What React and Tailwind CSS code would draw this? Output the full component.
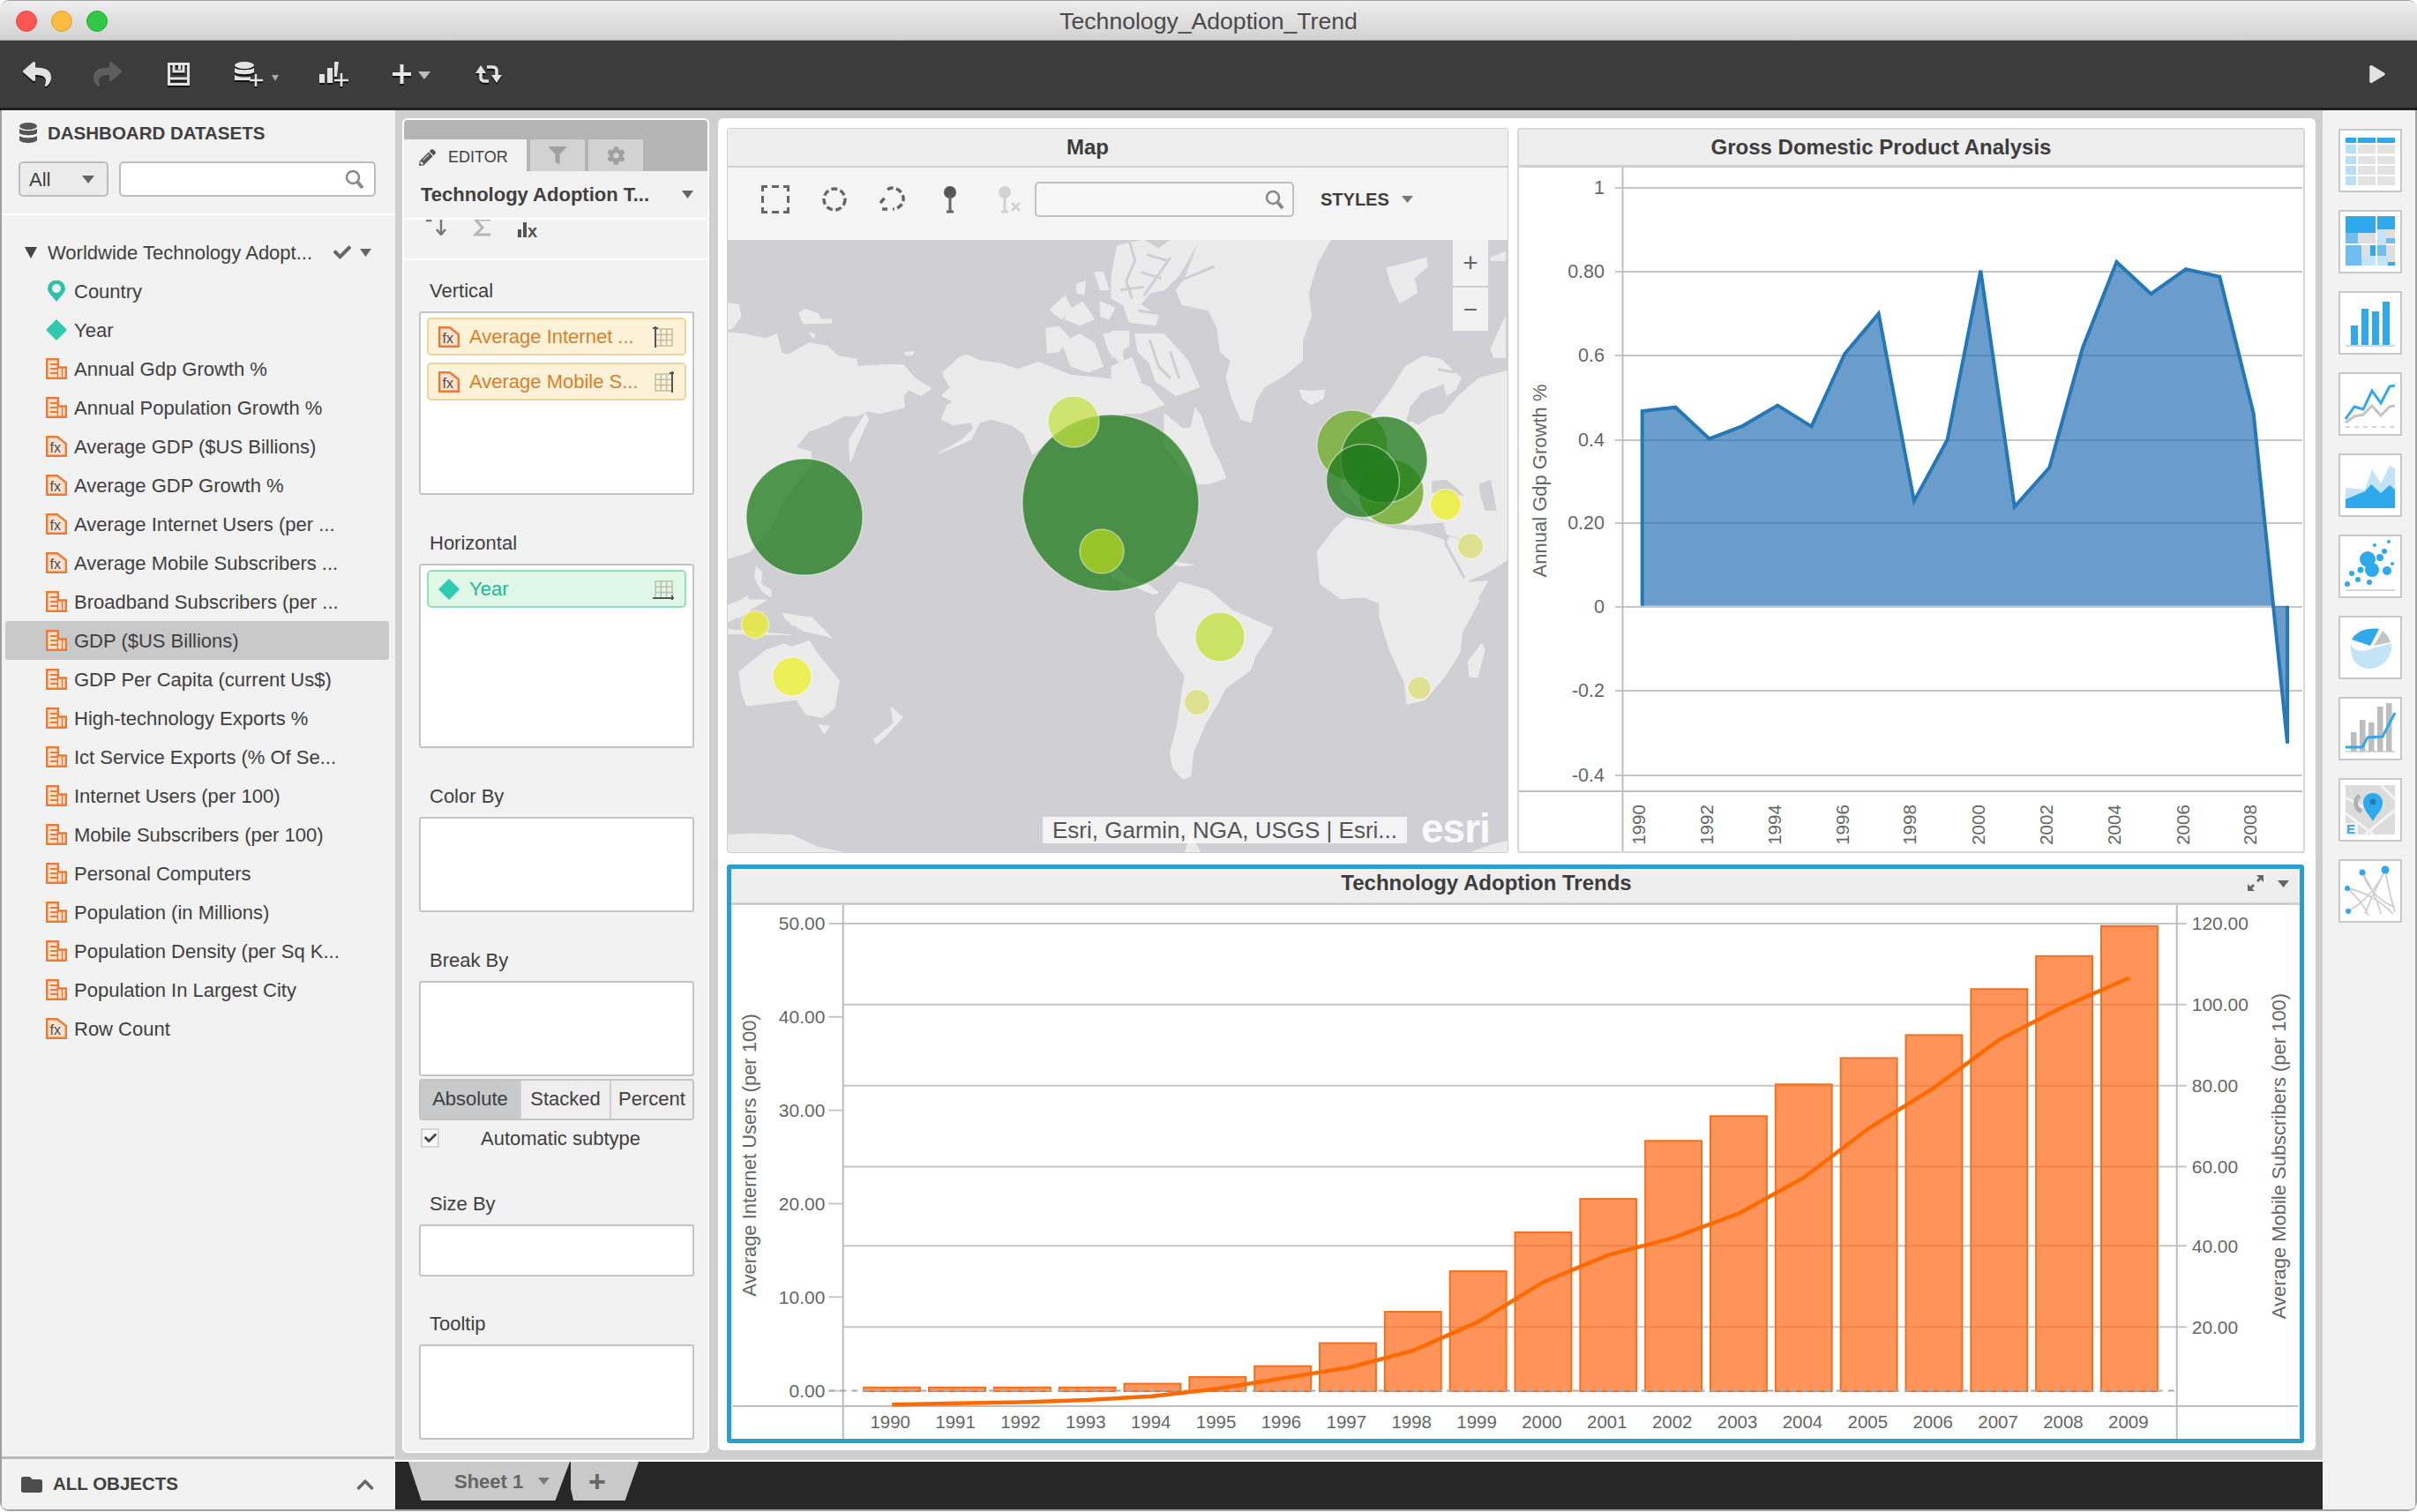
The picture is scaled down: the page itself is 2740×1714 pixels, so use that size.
import React from "react";
import { FaReply, FaShare, FaFilter, FaCog, FaPencilAlt, FaFolder, FaChevronUp, FaPlay, FaCheck } from "react-icons/fa";

const Tri = ({ w = 12, h = 8, c = "#666", className = "" }) => (
  <svg width={w} height={h} viewBox="0 0 12 8" preserveAspectRatio="none" className={className}>
    <path d="M0 0H12L6 8Z" fill={c} />
  </svg>
);

const SearchIcon = ({ className = "" }) => (
  <svg width="24" height="24" viewBox="0 0 24 24" fill="none" stroke="#8a8a8a" className={className}>
    <circle cx="10" cy="10" r="7" strokeWidth="2.6" />
    <path d="M15.5 15.5L21 22" strokeWidth="4" />
  </svg>
);

const MeasureIcon = () => (
  <svg width="24" height="24" viewBox="0 0 24 24" className="shrink-0">
    <rect x="1.2" y="1.2" width="12.6" height="21.6" fill="#fbe2d0" stroke="#ea7b34" strokeWidth="2.4" />
    <path d="M5 7H14M5 12H14M5 17H14" stroke="#ea7b34" strokeWidth="2.2" />
    <path d="M14 10.5H22.8V22.8H14" fill="#fbe2d0" stroke="#ea7b34" strokeWidth="2.4" />
    <path d="M18.5 11V23" stroke="#ea7b34" strokeWidth="1.6" />
  </svg>
);

const FxIcon = () => (
  <svg width="24" height="24" viewBox="0 0 24 24" className="shrink-0">
    <path d="M1.2 1.2H13L22.8 9V22.8H1.2Z" fill="#fbe2d0" stroke="#ea7b34" strokeWidth="2.4" />
    <text x="4.5" y="19" fontSize="16" fill="#4a4a4a" fontFamily="Liberation Sans">fx</text>
  </svg>
);

const PinIcon = () => (
  <svg width="24" height="24" viewBox="0 0 24 24" className="shrink-0">
    <path d="M12 24C7 17 2 14 2 9A10 9.5 0 0 1 22 9C22 14 17 17 12 24Z" fill="#2fc2ab" />
    <circle cx="12" cy="9" r="5" fill="#f2f2f2" />
  </svg>
);

const DiamondIcon = () => (
  <svg width="24" height="24" viewBox="0 0 24 24" className="shrink-0">
    <path d="M12 0L24 12L12 24L0 12Z" fill="#2ecbb0" />
  </svg>
);

const rows = [
  ["pin", "Country"],
  ["dia", "Year"],
  ["m", "Annual Gdp Growth %"],
  ["m", "Annual Population Growth %"],
  ["f", "Average GDP ($US Billions)"],
  ["f", "Average GDP Growth %"],
  ["f", "Average Internet Users (per ..."],
  ["f", "Average Mobile Subscribers ..."],
  ["m", "Broadband Subscribers (per ..."],
  ["m", "GDP ($US Billions)", true],
  ["m", "GDP Per Capita (current Us$)"],
  ["m", "High-technology Exports %"],
  ["m", "Ict Service Exports (% Of Se..."],
  ["m", "Internet Users (per 100)"],
  ["m", "Mobile Subscribers (per 100)"],
  ["m", "Personal Computers"],
  ["m", "Population (in Millions)"],
  ["m", "Population Density (per Sq K..."],
  ["m", "Population In Largest City"],
  ["f", "Row Count"],
];

const DbIcon = ({ c = "#555", w = 20, h = 24 }) => (
  <svg width={w} height={h} viewBox="0 0 20 24">
    <ellipse cx="10" cy="4" rx="10" ry="4" fill={c} />
    <path d="M0 7C3 10 17 10 20 7V12C17 15 3 15 0 12Z" fill={c} />
    <path d="M0 15C3 18 17 18 20 15V20C17 24 3 24 0 20Z" fill={c} />
  </svg>
);

function LeftPanel() {
  return (
    <div className="w-[448px] h-full flex flex-col bg-[#f2f2f2] text-[22px] text-[#404040] border-l-2 border-[#a0a0a0] shrink-0">
      <div className="h-[119px] border-b-2 border-white shrink-0 mt-0 flow-root">
        <div className="flex items-center h-[24px] mt-[14px] ml-[20px]">
          <DbIcon />
          <span className="ml-[12px] text-[20.5px] font-bold text-[#404040] leading-none">DASHBOARD DATASETS</span>
        </div>
        <div className="flex items-center mt-[20px] ml-[19px]">
          <div className="w-[102px] h-[40px] rounded-[5px] border-2 border-[#bdbdbd] bg-[#ececec] flex items-center pl-[10px] pr-[14px] justify-between">
            <span>All</span>
            <Tri w={14} h={9} c="#666" />
          </div>
          <div className="w-[291px] h-[40px] ml-[12px] rounded-[5px] border-2 border-[#bdbdbd] bg-white flex items-center justify-end pr-[10px]">
            <SearchIcon />
          </div>
        </div>
      </div>
      <div className="mt-[20px] h-[44px] flex items-center pl-[26px] shrink-0">
        <Tri w={14} h={13} c="#444" />
        <span className="ml-[12px] w-[324px] whitespace-nowrap">Worldwide Technology Adopt...</span>
        <FaCheck size={20} color="#666" />
        <Tri w={13} h={9} c="#666" className="ml-[10px]" />
      </div>
      <div className="ml-[4px] w-[435px]">
        {rows.map(([k, t, sel]) => (
          <div key={t} className={`h-[44px] flex items-center pl-[46px] gap-[8px] rounded-[3px] ${sel ? "bg-[#c9c9c9]" : ""}`}>
            {k === "pin" ? <PinIcon /> : k === "dia" ? <DiamondIcon /> : k === "m" ? <MeasureIcon /> : <FxIcon />}
            <span className="whitespace-nowrap">{t}</span>
          </div>
        ))}
      </div>
      <div className="mt-auto h-[60px] border-t-[3px] border-[#b9b9b9] mr-[1px] flex items-center pl-[22px] pr-[22px]">
        <FaFolder size={24} color="#4d4d4d" />
        <span className="ml-[12px] font-bold text-[20.5px] text-[#404040]">ALL OBJECTS</span>
        <FaChevronUp size={22} color="#666" className="ml-auto" />
      </div>
    </div>
  );
}

const GridIcon = ({ v }) => (
  <svg width="24" height="24" viewBox="0 0 24 24" className="ml-auto shrink-0" fill="none">
    <path d="M3 3H22V22H3ZM3 9.3H22M3 15.6H22M9.3 3V22M15.6 3V22" stroke="#bdbdaa" strokeWidth="1.5" />
    {v === "l" && <path d="M3 0V24M0 2H6" stroke="#555" strokeWidth="2" />}
    {v === "r" && <path d="M22 0V24M19 2H25" stroke="#555" strokeWidth="2" />}
    {v === "b" && <path d="M0 22H24M22 19V25" stroke="#555" strokeWidth="2" />}
  </svg>
);

const Pill = ({ text, v }) => (
  <div className="h-[43px] rounded-[5px] border-2 border-[#ecd49c] bg-[#fdf2d8] flex items-center pl-[11px] pr-[12px] text-[#d9802a]">
    <FxIcon />
    <span className="ml-[11px] whitespace-nowrap">{text}</span>
    <GridIcon v={v} />
  </div>
);

const Field = ({ label, h, top, children }) => (
  <div className="shrink-0" style={{ marginTop: top }}>
    <div className="h-[26px] mb-[10px] pl-[12px] leading-[26px]">{label}</div>
    <div className="rounded-[3px] border-2 border-[#c4c4c4] bg-white px-[7px] pt-[5px] flex flex-col gap-[8px]" style={{ height: h }}>
      {children}
    </div>
  </div>
);

function Editor() {
  return (
    <div className="w-[348px] h-[1513px] rounded-[6px] border-2 border-white bg-[#f2f2f2] text-[22px] text-[#404040] flex flex-col overflow-hidden shrink-0">
      <div className="h-[58px] bg-[#b5b5b5] flex items-end shrink-0">
        <div className="w-[139px] h-[36px] bg-[#f2f2f2] flex items-center pl-[17px] pt-[5px]">
          <FaPencilAlt size={19} color="#555" />
          <span className="ml-[14px] text-[18px]">EDITOR</span>
        </div>
        <div className="w-[62px] h-[36px] bg-[#d2d2d2] ml-[4px] flex items-center justify-center"><FaFilter size={20} color="#a0a0a0" /></div>
        <div className="w-[62px] h-[36px] bg-[#d2d2d2] ml-[4px] flex items-center justify-center"><FaCog size={21} color="#a0a0a0" /></div>
      </div>
      <div className="h-[55px] border-b-2 border-white flex items-center pl-[19px] pr-[16px] shrink-0">
        <span className="font-bold whitespace-nowrap">Technology Adoption T...</span>
        <Tri w={13} h={9} c="#666" className="ml-auto" />
      </div>
      <div className="h-[46px] border-b-2 border-white flex items-start pl-[23px] shrink-0 overflow-hidden">
        <svg width="26" height="18" viewBox="0 0 26 18" fill="none" stroke="#777" strokeWidth="2.5"><path d="M2 1H7V0M19 0V15M14 11L19 17L24 11" /></svg>
        <svg width="22" height="20" viewBox="0 0 22 20" fill="none" stroke="#b5b5b5" strokeWidth="3" className="ml-[29px]"><path d="M20 0H3L11 9L3 17H20" /></svg>
        <svg width="32" height="24" viewBox="0 0 32 24" className="ml-[29px]">
          <rect x="0" y="11" width="4" height="9" fill="#555" /><rect x="6" y="3" width="4" height="17" fill="#555" />
          <text x="11" y="20" fontSize="20" fontWeight="bold" fill="#555" fontFamily="Liberation Sans">x</text>
        </svg>
      </div>
      <div className="pl-[17px] pr-[15px]">
        <Field label="Vertical" h={208} top={22}>
          <Pill text="Average Internet ..." v="l" />
          <Pill text="Average Mobile S..." v="r" />
        </Field>
        <Field label="Horizontal" h={209} top={42}>
          <div className="h-[43px] rounded-[5px] border-2 border-[#93e0bb] bg-[#e0f8e7] flex items-center pl-[11px] pr-[12px] text-[#1fb595]">
            <DiamondIcon />
            <span className="ml-[11px]">Year</span>
            <GridIcon v="b" />
          </div>
        </Field>
        <Field label="Color By" h={108} top={42} />
        <Field label="Break By" h={108} top={42} />
        <div className="mt-[3px] h-[47px] flex rounded-[4px] border-2 border-[#c4c4c4] overflow-hidden">
          <div className="w-[112px] bg-[#c7c9ca] flex items-center justify-center pb-[3px]">Absolute</div>
          <div className="w-[102px] bg-[#f0eeee] border-l-2 border-[#cfcfcf] flex items-center justify-center pb-[3px]">Stacked</div>
          <div className="flex-1 bg-[#f0eeee] border-l-2 border-[#cfcfcf] flex items-center justify-center pb-[3px]">Percent</div>
        </div>
        <div className="mt-[9px] h-[22px] flex items-center pl-[2px]">
          <div className="w-[21px] h-[22px] border-2 border-[#d4d4d4] bg-[#f7f7f7] flex items-center justify-center"><FaCheck size={14} color="#444" /></div>
          <span className="ml-[47px]">Automatic subtype</span>
        </div>
        <Field label="Size By" h={59} top={51} />
        <Field label="Tooltip" h={108} top={41} />
      </div>
    </div>
  );
}

/* land traced from three crops, each in its own coordinates */
const landA = [
  "M0 315L60 320L130 335L170 320L185 385L210 390L280 350L340 360L380 395L440 405L445 430L530 425L600 425L640 470L695 505L660 530L620 510L600 530L605 570L520 590L478 582L440 600L400 598L340 630L280 650L235 705L285 720L290 760L260 800L220 850L180 910L150 980L110 1020L80 1060L0 1085Z",
  "M472 590L415 680L420 755L450 680L482 610Z",
  "M0 215L40 220L48 260L20 300L0 305Z",
  "M245 250L265 235L310 250L320 270L360 270L355 282L260 285Z",
  "M280 315L300 320L295 335Z",
  "M605 382L635 380L630 392L608 392Z",
  "M735 450L790 400L815 390L860 410L930 420L990 440L1060 415L1170 460L1280 470L1350 480V600L1260 600L1100 680L1040 730L1010 660L970 630L900 610L860 620L830 680L760 710L720 725L800 680L840 640L830 620L770 630L730 610L750 560L770 550L730 530L760 500L740 470Z",
  "M1085 300L1130 295L1165 330L1130 380L1090 385Z",
  "M1140 350L1200 320L1250 350L1280 430L1230 450L1170 430Z",
  "M1100 235L1150 190L1170 230L1140 270L1110 250Z",
  "M1160 240L1210 210L1250 270L1200 290L1150 270Z",
  "M1250 110L1280 110L1300 170L1270 170Z",
  "M1310 130L1340 170L1310 180Z",
  "M1330 50L1350 20V100L1330 100Z",
  "M1280 320L1340 310L1350 430L1300 380Z",
  "M1190 150L1220 140L1215 185L1190 180Z",
  "M1270 210L1320 230L1300 270L1270 260Z",
  "M100 1110L120 1130L115 1170L150 1190L150 1215L120 1195L95 1150Z",
  "M0 1260L70 1210L80 1260L45 1280L0 1300Z",
  "M190 1270L250 1280L330 1325L350 1350L260 1330L200 1290Z",
];
const landB = [
  "M0 480L60 470L130 500L180 560L100 590L0 590Z",
  "M180 590L240 640L270 640L285 570L305 600L340 700L370 760L390 810L330 830L295 830L260 800L180 700Z",
  "M20 20L110 0L160 30L200 0L300 0L230 120L180 170L130 180L100 220L160 260L150 290L60 280L40 220L0 200V120Z",
  "M80 320L180 320L260 410L300 500L220 530L150 480L130 420L90 380Z",
  "M0 310L60 310L60 360L0 400Z",
  "M0 430L70 400L100 480L50 500L0 480Z",
  "M250 130L300 0H745L700 80L670 180L680 260L650 340L650 410L590 460L520 500L490 550L475 620L440 610L410 540L390 470L405 410L370 380L360 300L330 240L240 220L220 170Z",
  "M640 510L680 515L725 510L720 540L680 560L650 540Z",
  "M935 95L1000 80L1070 60L1075 90L1030 130L1040 180L980 215L950 150Z",
  "M890 590L950 510L1000 430L1060 395L1120 405L1190 470L1170 510L1140 530L1130 490L1060 515L1025 560L1000 610L1045 630L1090 600L1130 590L1180 530L1250 470L1345 445V1050L1210 1025L1140 1000L1130 960L1020 970L880 950L780 850L800 690Z",
  "M700 1060L760 980L800 945L900 965L970 985L1040 990L1130 1020L1180 1110L1215 1165L1280 1160L1240 1230L1200 1290L1170 1350H950L920 1240L860 1215L780 1220L710 1170Z",
  "M1150 1010L1210 1030L1300 1040L1345 1050V1090L1280 1130L1210 1160L1170 1090L1140 1030Z",
  "M1290 60L1340 40V70L1290 70Z",
  "M1290 370L1340 260V400L1300 400Z",
  "M0 1100L60 1150L130 1175L160 1200L140 1205L80 1180L0 1150Z",
  "M210 1095L280 1105L230 1110Z",
];
const waterB = [
  "M1090 820L1140 815L1180 850L1200 870L1130 860L1090 860Z",
  "M1250 830L1290 815L1310 920L1270 920L1255 870Z",
  "M1020 972L1130 962L1090 985L1030 990Z",
];
const channels = [
  "M60 0L80 70L50 140L70 200",
  "M120 50L190 70M100 110L170 130M30 170L110 160",
  "M130 340L160 430L200 470M200 380L230 470",
  "M200 60L110 190",
  "M90 240L150 250",
  "M230 140L350 90",
  "M1135 1030L1200 1150",
  "M1060 520L1020 570L1010 620",
  "M1170 450L1110 440",
];

const circles = [
  [1258, 570, 100, "#1f7a1a", 0.76],
  [911, 586, 66, "#1f7a1a", 0.76],
  [1216, 478, 29, "#c4e040", 0.72],
  [1248, 625, 25, "#b7d820", 0.72],
  [1382, 722, 28, "#c4e040", 0.78],
  [1356, 796, 14.5, "#dddf80", 0.85],
  [855, 708, 15.5, "#ebeb30", 0.78],
  [897, 767, 22, "#edf030", 0.78],
  [1608, 780, 13, "#dddf80", 0.85],
  [1666, 619, 14.5, "#dddf80", 0.85],
  [1638, 572, 17.5, "#edf030", 0.8],
  [1532, 505, 40, "#72ad30", 0.8],
  [1576, 558, 37, "#72ad30", 0.85],
  [1568, 521, 49, "#1f7a1a", 0.76],
  [1544, 545, 41.5, "#1f7a1a", 0.76],
];

const landC = [
  "M860 45L908 -60L966 -33L1014 36L1094 96L1090 115L1060 190L1050 240L1000 300L985 350L960 420L935 520L930 600L915 610L895 570L890 520L905 420L915 300L920 260L890 190L865 120Z",
  "M1310 0H1510L1475 110L1470 180L1440 260L1400 340L1365 355L1360 280L1330 170L1310 60Z",
  "M1515 150L1520 170L1505 265L1490 260L1488 210Z",
  "M25 245L80 170L115 150L130 160L165 140L180 180L225 275L215 370L190 400L160 390L140 340L40 360L30 310Z",
  "M330 365L352 400L320 460L300 490L295 475L335 420Z",
  "M185 425L205 430L195 455Z",
  "M0 20L30 0L80 0L50 30L25 60L10 50Z",
  "M0 100L130 120L0 115Z",
  "M120 50L170 60L210 130L170 95L130 85Z",
  "M0 800L50 795L130 800L180 840L235 860H0Z",
  "M1490 860L1540 830L1568 820V860Z",
  "M920 860L930 800L950 860Z",
];

const ToolIcon = ({ children, className = "" }) => (
  <svg width="32" height="32" viewBox="0 0 32 32" fill="none" className={`shrink-0 ${className}`}>{children}</svg>
);

function MapPanel() {
  return (
    <div className="w-[886px] h-[822px] border border-[#cfcfcf] rounded-[3px] flex flex-col shrink-0 bg-white overflow-hidden">
      <div className="h-[44px] bg-[#eeeeee] border-b-2 border-[#cfcfcf] flex items-center justify-center pr-[68px] font-bold text-[24px] text-[#3d3d3d] shrink-0">Map</div>
      <div className="h-[82px] bg-[#f5f5f5] flex items-center pl-[38px] pb-[10px] shrink-0">
        <ToolIcon><path d="M1.5 7V1.5H7M12 1.5H20M25 1.5H30.5V7M30.5 12V20M30.5 25V30.5H25M20 30.5H12M7 30.5H1.5V25M1.5 20V12" stroke="#666" strokeWidth="3" /></ToolIcon>
        <ToolIcon className="ml-[35px]"><circle cx="16" cy="16" r="12" stroke="#666" strokeWidth="3.5" strokeDasharray="7 3.5" /></ToolIcon>
        <ToolIcon className="ml-[34px]"><path d="M10 5C16 0 27 5 28 14C29 22 22 27 16 27M10 27H4M2 20L8 13M12 5" stroke="#666" strokeWidth="3.5" strokeDasharray="7 3.5" /></ToolIcon>
        <ToolIcon className="ml-[33px]"><circle cx="16" cy="8" r="7" fill="#555" /><path d="M16 12V30M12 30H20" stroke="#666" strokeWidth="3" /></ToolIcon>
        <ToolIcon className="ml-[33px]"><circle cx="13" cy="8" r="7" fill="#d2d2d2" /><path d="M13 12V30M9 30H17M21 20L30 29M30 20L21 29" stroke="#d2d2d2" strokeWidth="3" /></ToolIcon>
        <div className="w-[294px] h-[40px] ml-[15px] rounded-[5px] border-2 border-[#c0c0c0] bg-[#f7f7f7] flex items-center justify-end pr-[8px] shrink-0"><SearchIcon /></div>
        <span className="ml-[30px] font-bold text-[20px] text-[#3d3d3d]">STYLES</span>
        <Tri w={13} h={8} c="#777" className="ml-[14px]" />
      </div>
      <div className="relative flex-1">
        <svg width="884" height="694" viewBox="824 272 884 694" className="block bg-[#cfcfd4]">
          <g fill="#ebebeb" stroke="#ebebeb" strokeWidth="3" strokeLinejoin="round">
            <g transform="translate(823 272) scale(0.3333)">{landA.map((d, i) => <path key={i} d={d} />)}</g>
            <g transform="translate(1259 272) scale(0.3333)">{landB.map((d, i) => <path key={i} d={d} />)}</g>
            <g transform="translate(823 680) scale(0.565 0.3333)">{landC.map((d, i) => <path key={i} d={d} />)}</g>
          </g>
          <g transform="translate(1259 272) scale(0.3333)" fill="#cfcfd4">
            {waterB.map((d, i) => <path key={i} d={d} />)}
            {channels.map((d, i) => <path key={i} d={d} fill="none" stroke="#cfcfd4" strokeWidth="9" />)}
          </g>
          {circles.map(([x, y, r, f, o], i) => (
            <circle key={i} cx={x} cy={y} r={r} fill={f} fillOpacity={o} stroke="#ffffff" strokeOpacity="0.45" strokeWidth="1.5" />
          ))}
        </svg>
        <div className="absolute left-[822px] top-0 w-[40px] h-[103px] bg-[#f2f2f2] flex flex-col text-[#666]">
          <div className="h-[54px] border-b-2 border-[#cfcfd4] flex items-center justify-center text-[30px] leading-none">+</div>
          <div className="flex-1 flex items-center justify-center text-[28px] leading-none">−</div>
        </div>
        <div className="absolute left-[357px] top-[654px] w-[413px] h-[30px] bg-white/75 flex items-center justify-center text-[26px] text-[#555] whitespace-nowrap">Esri, Garmin, NGA, USGS | Esri...</div>
        <div className="absolute left-[786px] top-[644px] text-[46px] font-bold text-white/90 leading-none tracking-[-1px]">esri</div>
      </div>
    </div>
  );
}

const gy = (Y) => 130 + Y / 1.845;
const gx = (X) => 1700 + X / 1.668;
const gdpPts = [[268,620],[331,612],[395,678],[458,651],[524,608],[588,652],[651,500],[715,416],[782,808],[845,680],[908,326],[972,820],[1038,738],[1101,487],[1165,308],[1230,375],[1296,323],[1360,339],[1424,625],[1488,1315]].map(([x, y]) => [gx(x), gy(y)]);
const gdpTicks = [["1",213],["0.80",308],["0.6",403],["0.4",499],["0.20",593],["0",688],["-0.2",783],["-0.4",879]];
const gdpYears = [[1990,1856],[1992,1933],[1994,2010],[1996,2087],[1998,2163],[2000,2241],[2002,2318],[2004,2395],[2006,2473],[2008,2549.5]];

function GdpPanel() {
  const base = gy(1027);
  const top = gdpPts.map((p) => p.join(",")).join(" ");
  const x0 = gdpPts[0][0], xn = gdpPts[19][0];
  return (
    <div className="w-[893px] h-[822px] border-2 border-[#d8d8d8] rounded-[3px] flex flex-col shrink-0 bg-white overflow-hidden">
      <div className="h-[43px] bg-[#eeeeee] border-b-[3px] border-[#cfcfcf] flex items-center justify-center pr-[68px] font-bold text-[24px] text-[#3d3d3d] shrink-0">Gross Domestic Product Analysis</div>
      <svg width="889" height="775" viewBox="1721 190 889 775" className="block">
        {gdpTicks.map(([t, y]) => (
          <g key={t}>
            <path d={`M1830 ${y}H2609`} stroke="#c6c6c6" strokeWidth="2" />
            <text x="1818" y={y} textAnchor="end" dominantBaseline="central" fontSize="21.5" fill="#666">{t}</text>
          </g>
        ))}
        <path d="M1838.5 190V965M1721 897H2609" stroke="#bdbdbd" strokeWidth="2" />
        <polygon points={`${x0},${base} ${top} ${xn},${base}`} fill="#236eb4" fillOpacity="0.68" />
        <polyline points={`${x0},${base} ${top} ${xn},${base}`} fill="none" stroke="#2577b5" strokeWidth="4" />
        <text x="1744" y="545" transform="rotate(-90 1744 545)" textAnchor="middle" dominantBaseline="central" fontSize="22" fill="#666">Annual Gdp Growth %</text>
        {gdpYears.map(([t, x]) => (
          <text key={t} x={x} y="935" transform={`rotate(-90 ${x} 935)`} textAnchor="middle" dominantBaseline="central" fontSize="20.5" fill="#666">{t}</text>
        ))}
      </svg>
    </div>
  );
}

const bh = [1272,1272,1272,1272,1263,1247,1221,1166,1091,994,901,821,682,623,547,484,429,319,240,168];
const ly = [1313,1310,1307,1302,1293,1275,1250,1225,1184,1115,1020,955,914,856,770,652,555,440,360,292];
const Y = (v) => 970 + v / 2.107;
const leftT = [["50.00",1047],["40.00",1153],["30.00",1259],["20.00",1365],["10.00",1471],["0.00",1577.5]];
const rightT = [["120.00",1047],["100.00",1139],["80.00",1231],["60.00",1323],["40.00",1413],["20.00",1505]];

function TrendPanel() {
  const line = ly.map((v, i) => `${1010 + i * 73.95},${Y(v)}`).join(" ");
  return (
    <div className="w-[1788px] h-[656px] border-[5px] border-[#2b9fcb] rounded-[3px] flex flex-col bg-white overflow-hidden">
      <div className="relative h-[41px] bg-[#eeeeee] border-b-[3px] border-[#cfcfcf] flex items-center justify-center pr-[66px] pb-[7px] font-bold text-[24px] text-[#3d3d3d] shrink-0">
        <span>Technology Adoption Trends</span>
        <svg width="20" height="20" viewBox="0 0 20 20" className="absolute left-[1718px] top-[6px]" fill="#666">
          <path d="M11 1H19V9L16 6L13 9L11 7L14 4Z" /><path d="M9 19H1V11L4 14L7 11L9 13L6 16Z" />
        </svg>
        <Tri w={13} h={8} c="#666" className="absolute left-[1753px] top-[13px]" />
      </div>
      <svg width="1778" height="606" viewBox="829 1026 1778 606" className="block">
        {rightT.map(([t, y]) => (
          <g key={t}>
            <path d={`M954.5 ${y}H2480`} stroke="#c6c6c6" strokeWidth="2" />
            <text x="2486" y={y} dominantBaseline="central" fontSize="21" fill="#666">{t}</text>
          </g>
        ))}
        {leftT.map(([t, y]) => (
          <g key={t}>
            <path d={`M938 ${y}H954.5`} stroke="#c6c6c6" strokeWidth="2" />
            <text x="934" y={y} textAnchor="end" dominantBaseline="central" fontSize="21" fill="#666">{t}</text>
          </g>
        ))}
        <path d="M954.5 1026V1632M2469 1026V1632M829 1595H2607" stroke="#bdbdbd" strokeWidth="2" />
        {bh.map((v, i) => (
          <rect key={i} x={978 + i * 73.95} y={Y(v)} width="64" height={1578 - Y(v)} fill="#ff6f20" fillOpacity="0.74" stroke="#f2701f" strokeWidth="2" />
        ))}
        <path d="M938 1577.5H2469" stroke="#aaaaaa" strokeWidth="2" strokeDasharray="7 6" />
        <polyline points={line} fill="none" stroke="#ff6a00" strokeWidth="4.5" />
        {bh.map((v, i) => (
          <text key={i} x={1008 + i * 74} y="1612" textAnchor="middle" dominantBaseline="central" fontSize="20.5" fill="#666">{1990 + i}</text>
        ))}
        <text x="848" y="1310" transform="rotate(-90 848 1310)" textAnchor="middle" dominantBaseline="central" fontSize="22" fill="#666">Average Internet Users (per 100)</text>
        <text x="2585" y="1311" transform="rotate(-90 2585 1311)" textAnchor="middle" dominantBaseline="central" fontSize="22" fill="#666">Average Mobile Subscribers (per 100)</text>
      </svg>
    </div>
  );
}

const B = "#2fa8ec", M = "#6fbdf0", L = "#c3e3f7", G = "#dfdfdf";

const galleryIcons = [
  <g key="t">
    {[[8,12],[22,20],[44,20]].map(([x, w]) => <rect key={x} x={x} y="10" width={w} height="6" fill={B} />)}
    {[[18,10],[31,9],[42,10],[54,10]].map(([y, h]) => (
      <g key={y}>
        <rect x="8" y={y} width="12" height={h} fill="#b9dff5" />
        <rect x="22" y={y} width="20" height={h} fill="#e3e3e3" />
        <rect x="44" y={y} width="20" height={h} fill="#e3e3e3" />
      </g>
    ))}
  </g>,
  <g key="tm">
    {[[8,7,34,19,B],[8,26,14,12,M],[22,26,20,12,G],[8,40,18,23,M],[26,40,10,12,G],[36,40,6,12,B],[26,52,16,11,L],[44,7,20,15,B],[44,22,10,18,L],[54,22,10,10,G],[54,32,10,6,M],[44,40,10,12,M],[54,40,10,12,G],[44,52,12,11,L],[56,52,8,7,G],[56,59,8,4,B]].map(([x, y, w, h, f], i) => (
      <rect key={i} x={x} y={y} width={w} height={h} fill={f} />
    ))}
  </g>,
  <g key="b">
    {[[14,39],[26,20],[38,23],[50,12]].map(([x, y]) => <rect key={x} x={x} y={y} width="8" height={61 - y} fill={B} />)}
    <path d="M8 62H64" stroke="#c8c8c8" strokeWidth="1.5" />
  </g>,
  <g key="l" fill="none">
    <path d="M8 62H64" stroke="#c8c8c8" strokeWidth="1.5" strokeDasharray="5 5" />
    <polyline points="8,57 18,50 28,48 38,38 48,49 58,39 64,38" stroke="#c4c4c4" strokeWidth="3" />
    <polyline points="8,53 18,39 28,42 38,21 48,35 58,16 64,15" stroke={B} strokeWidth="3" />
  </g>,
  <g key="a">
    <polygon points="8,39 30,41 38,18 48,34 58,14 64,17 64,62 8,62" fill={L} />
    <polygon points="8,52 30,43 37,35 48,45 58,36 64,41 64,62 8,62" fill={B} />
  </g>,
  <g key="s" fill={B}>
    {[[33,28,9],[38,40,8],[55,41,5],[47,26,4],[52,19,3],[41,12,2],[57,8,2],[61,33,2],[25,40,3.5],[15,44,3],[22,51,3],[10,56,3],[35,54,3]].map(([x, y, r]) => <circle key={`${x}${y}`} cx={x} cy={y} r={r} />)}
    <path d="M8 63H64" stroke="#c8c8c8" strokeWidth="1.5" />
  </g>,
  <g key="p">
    <path d="M14 33C18 40 28 42 35 38L60 31C62 46 50 60 35 60C20 60 12 46 14 33Z" fill={L} />
    <path d="M15 27C20 17 34 13 46 15L36 34Z" fill={B} />
    <path d="M40 34L50 17C55 21 58 26 59 30Z" fill="#c4c4c4" />
  </g>,
  <g key="c">
    {[[14,40],[24,26],[34,29],[44,11],[54,7]].map(([x, y]) => <rect key={x} x={x} y={y} width="6.5" height={62 - y} fill="#bdbdbd" />)}
    <path d="M8 62H64" stroke="#c8c8c8" strokeWidth="1.5" />
    <polyline points="8,57 27,57 33,46 50,45 64,18" fill="none" stroke={B} strokeWidth="3" />
  </g>,
  <g key="m">
    <rect x="8" y="8" width="56" height="56" fill="#dcdcdc" />
    <path d="M8 40L40 64M30 64L64 36M8 22L34 36M48 8L64 24" stroke="#f4f4f4" strokeWidth="3" fill="none" />
    <path d="M24 20C18 24 18 34 26 38" stroke="#b0b0b0" strokeWidth="5" fill="none" />
    <path d="M39 49C34 40 28 36 28 28A11 11 0 0 1 50 28C50 36 44 40 39 49Z" fill={B} />
    <circle cx="39" cy="27" r="3.5" fill="#1b7fbf" />
    <rect x="8" y="51" width="14" height="13" fill="#f2f2f2" />
    <text x="9" y="63" fontSize="15" fontWeight="bold" fill={B} fontFamily="Liberation Sans">E</text>
  </g>,
  <g key="n">
    <path d="M27 15C36 30 44 45 48 62M53 12C44 30 36 46 30 62M53 12C56 30 60 46 64 60M10 33C26 36 44 44 62 62M11 59C30 48 44 32 53 12M27 15C34 36 50 50 64 54M10 33C22 44 30 54 34 64" fill="none" stroke="#cfcfcf" strokeWidth="1.8" />
    {[[10,33,3],[27,15,3.5],[53,12,4.5],[11,59,3]].map(([x, y, r]) => <circle key={x + y} cx={x} cy={y} r={r} fill={B} />)}
  </g>,
];

function Gallery() {
  return (
    <div className="w-[107px] h-full bg-[#f2f2f2] flex flex-col gap-[20px] pt-[21px] pl-[18px] shrink-0 border-r-2 border-[#a0a0a0]">
      {galleryIcons.map((ic, i) => (
        <div key={i} className="w-[72px] h-[72px] border-2 border-[#c9c9c9] bg-white shrink-0">
          <svg width="68" height="68" viewBox="2 2 68 68" className="block">{ic}</svg>
        </div>
      ))}
    </div>
  );
}

function Toolbar() {
  return (
    <div className="h-[79px] bg-[#3c3c3c] border-b-[3px] border-[#1f1f1f] flex items-center pl-[26px] pr-[35px] shrink-0 text-[#e6e6e6]">
      <FaReply size={32} color="#e2e2e2" className="drop-shadow-[0_2px_0_#111]" />
      <FaShare size={32} color="#5e5e5e" className="ml-[48px]" />
      <svg width="25" height="26" viewBox="0 0 25 26" className="ml-[52px] drop-shadow-[0_2px_0_#111]" fill="none" stroke="#e2e2e2" strokeWidth="3">
        <path d="M1.5 1.5H23.5V24.5H1.5ZM7 1.5V10H18V1.5M1.5 18H23.5" />
        <rect x="12" y="1" width="3" height="7" fill="#e2e2e2" stroke="none" />
      </svg>
      <svg width="33" height="28" viewBox="0 0 33 28" className="ml-[51px] drop-shadow-[0_2px_0_#111]" fill="#e2e2e2">
        <ellipse cx="11" cy="4" rx="11" ry="4" />
        <path d="M0 7C4 10 18 10 22 7V12C18 15 4 15 0 12ZM0 15C4 18 14 18 18 17V21H0Z" />
        <path d="M24 14V28M17 21H32" stroke="#e2e2e2" strokeWidth="2.5" />
      </svg>
      <Tri w={8} h={7} c="#aaa" className="ml-[9px] mt-[8px]" />
      <svg width="33" height="28" viewBox="0 0 33 28" className="ml-[46px] drop-shadow-[0_2px_0_#111]" fill="#e2e2e2">
        <rect x="0" y="14" width="6" height="10" /><rect x="9" y="7" width="6" height="17" /><path d="M17 0H22L20 17H17Z" />
        <path d="M25 13V28M17 21H33" stroke="#e2e2e2" strokeWidth="2.5" />
      </svg>
      <svg width="21" height="22" viewBox="0 0 21 22" className="ml-[50px] drop-shadow-[0_2px_0_#111]"><path d="M10.5 0V22M0 11H21" stroke="#e8e8e8" strokeWidth="4" /></svg>
      <Tri w={14} h={9} c="#bbb" className="ml-[8px] mt-[3px]" />
      <svg width="30" height="26" viewBox="0 0 30 26" className="ml-[51px] drop-shadow-[0_2px_0_#111]" fill="none" stroke="#e2e2e2" strokeWidth="3.5">
        <path d="M6 10V17C6 20 8 21 11 21H15M24 16V9C24 6 22 5 19 5H13" />
        <path d="M0 12H12L6 3ZM18 14H30L24 23Z" fill="#e2e2e2" stroke="none" />
      </svg>
      <FaPlay size={20} color="#e2e2e2" className="ml-auto" />
    </div>
  );
}

export default function App() {
  return (
    <div className="w-[2740px] h-[1714px] bg-white font-['Liberation_Sans',sans-serif]">
      <div className="w-[2740px] h-[1713px] rounded-[10px] border-b-2 border-t border-[#a0a0a0] overflow-hidden flex flex-col">
        <div className="h-[45px] bg-gradient-to-b from-[#eeeeee] to-[#d2d2d2] border-b border-[#b3b3b3] relative flex items-center justify-center pt-[3px] shrink-0 text-[26.6px] text-[#4a4a4a]">
          <div className="absolute left-[18px] top-[11px] flex gap-[16px]">
            <span className="w-[24px] h-[24px] rounded-full bg-[#fc5753] border border-[#df4744]" />
            <span className="w-[24px] h-[24px] rounded-full bg-[#fdbc40] border border-[#de9f34]" />
            <span className="w-[24px] h-[24px] rounded-full bg-[#33c748] border border-[#27aa35]" />
          </div>
          <span>Technology_Adoption_Trend</span>
        </div>
        <Toolbar />
        <div className="flex flex-1 min-h-0">
          <LeftPanel />
          <div className="w-[2185px] h-full flex flex-col shrink-0">
            <div className="h-[1530px] bg-[#cfcfcf] flex pl-[8px] pt-[9px] gap-[10px] shrink-0">
              <Editor />
              <div className="w-[1811px] h-[1510px] bg-white rounded-[6px] pl-[10px] pt-[11px] shrink-0">
                <div className="flex gap-[10px]">
                  <MapPanel />
                  <GdpPanel />
                </div>
                <div className="mt-[13px]">
                  <TrendPanel />
                </div>
              </div>
            </div>
            <div className="flex-1 bg-[#272727] border-t-2 border-white flex items-start pl-[15px] text-[#666]">
              <div className="w-[183px] h-[44px] bg-[#c9c9c9] [clip-path:polygon(0_0,100%_0,91%_100%,8%_100%)] flex items-center pl-[52px] font-bold text-[22px]">
                <span>Sheet 1</span>
                <Tri w={13} h={8} c="#777" className="ml-[17px]" />
              </div>
              <div className="w-[77px] h-[44px] ml-[1px] bg-[#c9c9c9] [clip-path:polygon(0_0,100%_0,80%_100%,4%_100%,0_70%)] flex items-center pl-[20px] font-bold text-[34px] leading-none">+</div>
            </div>
          </div>
          <Gallery />
        </div>
      </div>
    </div>
  );
}
